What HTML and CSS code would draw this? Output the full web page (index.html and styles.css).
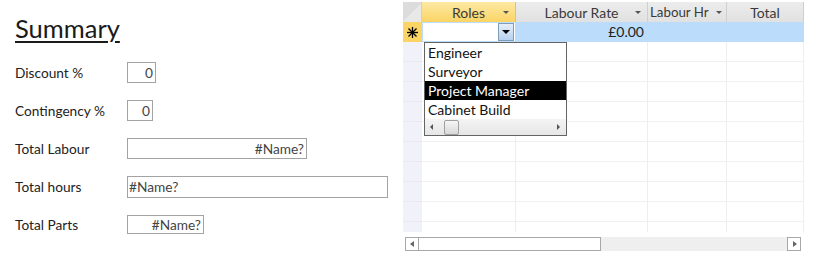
FILE: index.html
```html
<!DOCTYPE html>
<html lang="en">
<head>
    <meta charset="UTF-8">
    <title>Summary</title>
    <link rel="stylesheet" href="styles.css">
</head>
<body>
    <div class="summary">
        <h2>Summary</h2>
        <div class="field">
            <label>Discount %</label>
            <div class="box num w-discount">0</div>
        </div>
        <div class="field">
            <label>Contingency %</label>
            <div class="box num w-contingency">0</div>
        </div>
        <div class="field">
            <label>Total Labour</label>
            <div class="box num w-labour">#Name?</div>
        </div>
        <div class="field">
            <label>Total hours</label>
            <div class="box w-hours">#Name?</div>
        </div>
        <div class="field">
            <label>Total Parts</label>
            <div class="box num w-parts">#Name?</div>
        </div>
    </div>

    <div class="sheet">
        <div class="grid">
            <div class="corner"></div>
            <div class="head active">Roles <span class="arrow"></span></div>
            <div class="head">Labour Rate <span class="arrow"></span></div>
            <div class="head left-text">Labour Hr <span class="arrow"></span></div>
            <div class="head">Total</div>

            <div class="sel new">
                <svg width="11" height="11" viewBox="0 0 11 11"><g stroke="#000" stroke-width="1.3"><line x1="5.5" y1="0" x2="5.5" y2="11"/><line x1="0" y1="5.5" x2="11" y2="5.5"/><line x1="1.5" y1="1.5" x2="9.5" y2="9.5"/><line x1="9.5" y1="1.5" x2="1.5" y2="9.5"/></g></svg>
            </div>
            <div class="cell combo"><span class="combo-btn"><span class="tri"></span></span></div>
            <div class="cell hl num">£0.00</div>
            <div class="cell hl"></div>
            <div class="cell hl"></div>

            <div class="sel"></div><div class="cell"></div><div class="cell"></div><div class="cell"></div><div class="cell"></div>
            <div class="sel"></div><div class="cell"></div><div class="cell"></div><div class="cell"></div><div class="cell"></div>
            <div class="sel"></div><div class="cell"></div><div class="cell"></div><div class="cell"></div><div class="cell"></div>
            <div class="sel"></div><div class="cell"></div><div class="cell"></div><div class="cell"></div><div class="cell"></div>
            <div class="sel"></div><div class="cell"></div><div class="cell"></div><div class="cell"></div><div class="cell"></div>
            <div class="sel"></div><div class="cell"></div><div class="cell"></div><div class="cell"></div><div class="cell"></div>
            <div class="sel"></div><div class="cell"></div><div class="cell"></div><div class="cell"></div><div class="cell"></div>
            <div class="sel"></div><div class="cell"></div><div class="cell"></div><div class="cell"></div><div class="cell"></div>
            <div class="sel"></div><div class="cell"></div><div class="cell"></div><div class="cell"></div><div class="cell"></div>
            <div class="sel"></div><div class="cell"></div><div class="cell"></div><div class="cell"></div><div class="cell"></div>

            <div class="dropdown">
                <div class="item">Engineer</div>
                <div class="item">Surveyor</div>
                <div class="item picked">Project Manager</div>
                <div class="item">Cabinet Build</div>
                <div class="mini-scroll">
                    <span class="mini-left"></span>
                    <span class="mini-thumb"></span>
                    <span class="mini-right"></span>
                </div>
            </div>
        </div>

        <div class="hscroll">
            <div class="btn"><span class="tri-left"></span></div>
            <div class="thumb"></div>
            <div class="track"></div>
            <div class="btn"><span class="tri-right"></span></div>
        </div>
    </div>
</body>
</html>
```

FILE: styles.css
```css
body {
    font-family: Lato, "Open Sans", sans-serif;
    margin: 0;
    padding: 0;
    display: flex;
    background: #fff;
    color: #222;
    width: 813px;
    height: 261px;
    overflow: hidden;
}
.summary {
    width: 388px;
    padding-left: 15px;
}
h2 {
    font-size: 25.5px;
    font-weight: normal;
    text-decoration: underline;
    text-decoration-thickness: 2px;
    text-underline-offset: 3px;
    margin: 12px 0 18px 0;
    line-height: 32px;
    color: #1a1a1a;
}
.field {
    display: flex;
    align-items: center;
    height: 21px;
    margin-bottom: 17px;
    font-size: 13.7px;
}
.field label {
    width: 112px;
}
.box {
    height: 19px;
    line-height: 19px;
    border: 1px solid #a3a3a3;
    font-size: 13.7px;
    color: #444;
    padding: 0 1px;
    box-sizing: content-box;
}
.box.num {
    text-align: right;
    padding-right: 2px;
}
.w-discount { width: 24px; }
.w-contingency { width: 21px; }
.w-labour { width: 175px; }
.w-hours { width: 257px; height: 20px; }
.w-parts { width: 72px; height: 17px; line-height: 17px; }

.sheet {
    padding-top: 2px;
}
.grid {
    position: relative;
    display: grid;
    grid-template-columns: 19px 94px 132px 79px 77px;
    grid-auto-rows: 20px;
    width: 401px;
    height: 230px;
    overflow: hidden;
    font-size: 14px;
}
.corner {
    background: linear-gradient(135deg, #dcdcdc 50%, #e8e8e8 50%);
    border-right: 1px solid #d0d0d0;
}
.head {
    background: linear-gradient(#ececec, #e1e1e1);
    border-right: 1px solid #cfcfcf;
    display: flex;
    align-items: center;
    justify-content: center;
    color: #3a3a3a;
    position: relative;
}
.head.active {
    background: linear-gradient(#fde9a4, #fbd465);
    border-right-color: #e8c460;
}
.head .arrow {
    position: absolute;
    right: 6px;
    top: 9px;
    border-left: 3px solid transparent;
    border-right: 3px solid transparent;
    border-top: 3px solid #555;
}
.head.left-text {
    justify-content: flex-start;
    padding-left: 2px;
    font-size: 13.3px;
}
.head.left-text .arrow {
    right: 4px;
}
.sel {
    background: #f1f1f9;
    border-bottom: 1px solid #e9e9ef;
}
.sel.new {
    background: #fbd465;
    display: flex;
    align-items: center;
    justify-content: center;
    border-bottom: none;
}
.cell {
    border-right: 1px solid #eeeeee;
    border-bottom: 1px solid #f0f0f0;
}
.cell.hl {
    background: #bcdcfb;
    border-right-color: #bcdcfb;
    border-bottom: none;
}
.cell.num {
    text-align: right;
    line-height: 20px;
    padding-right: 3px;
    color: #222;
}
.cell.combo {
    background: #fff;
    border: none;
    position: relative;
    box-shadow: inset 0 0 0 1px #bcdcfb;
}
.combo-btn {
    position: absolute;
    right: 2px;
    top: 1px;
    width: 14px;
    height: 16px;
    border: 1px solid #7f9db9;
    background: linear-gradient(#e4eefa, #b7d1ef);
}
.combo-btn .tri {
    position: absolute;
    left: 3px;
    top: 6px;
    border-left: 4px solid transparent;
    border-right: 4px solid transparent;
    border-top: 4px solid #000;
}
.dropdown {
    position: absolute;
    left: 21px;
    top: 40px;
    width: 141px;
    height: 92px;
    border: 1px solid #646464;
    background: #fff;
    font-size: 14px;
    color: #111;
}
.item {
    height: 19px;
    line-height: 19px;
    padding-left: 3px;
}
.item.picked {
    background: #000;
    color: #fff;
}
.mini-scroll {
    position: relative;
    height: 16px;
    background: linear-gradient(#f4f4f4, #e6e6e6);
}
.mini-left, .mini-right {
    position: absolute;
    top: 5px;
    border-top: 3px solid transparent;
    border-bottom: 3px solid transparent;
}
.mini-left {
    left: 5px;
    border-right: 3px solid #555;
}
.mini-right {
    right: 6px;
    border-left: 3px solid #555;
}
.mini-thumb {
    position: absolute;
    left: 19px;
    top: 1px;
    width: 13px;
    height: 13px;
    border: 1px solid #a0a0a0;
    border-radius: 2px;
    background: linear-gradient(#f6f6f6, #d8d8d8);
}
.hscroll {
    display: flex;
    margin: 5px 0 0 2px;
    width: 396px;
    height: 14px;
}
.hscroll .btn {
    width: 14px;
    height: 14px;
    border: 1px solid #a8a8a8;
    box-sizing: border-box;
    position: relative;
    background: #fff;
}
.hscroll .thumb {
    width: 182px;
    border: 1px solid #a8a8a8;
    border-left: none;
    box-sizing: border-box;
    background: #fff;
}
.hscroll .track {
    flex: 1;
    background: #efefef;
}
.tri-left, .tri-right {
    position: absolute;
    top: 3px;
    border-top: 3px solid transparent;
    border-bottom: 3px solid transparent;
}
.tri-left {
    left: 4px;
    border-right: 4px solid #666;
}
.tri-right {
    left: 5px;
    border-left: 4px solid #666;
}
```
